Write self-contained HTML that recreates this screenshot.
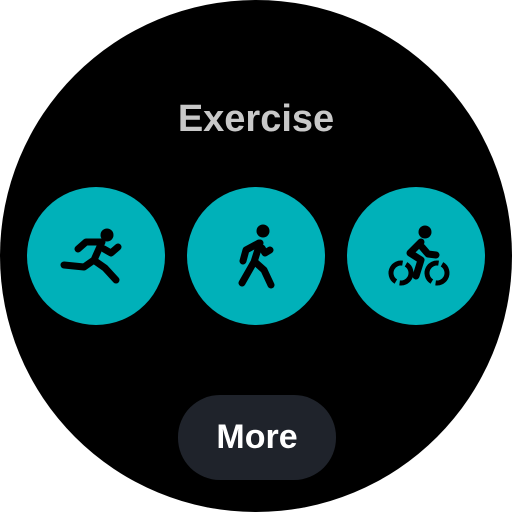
<!DOCTYPE html>
<html><head><style>
html,body{margin:0;padding:0;width:512px;height:512px;background:#fff;overflow:hidden}
.face{position:absolute;left:0;top:0;width:512px;height:512px;border-radius:50%;background:#000}
.t{position:absolute;left:0;width:512px;top:98px;text-align:center;color:#c8c8c8;font:bold 38px "Liberation Sans",sans-serif}
.btn{position:absolute;left:178px;top:395px;width:158px;height:85px;border-radius:42px;background:#1f232b;color:#fff;font:bold 34px "Liberation Sans",sans-serif;text-align:center;line-height:85px}
svg{position:absolute;left:0;top:0}
</style></head><body>
<div class="face"></div>
<div class="t">Exercise</div>
<svg width="512" height="512">
<g fill="#00b1b9"><circle cx="96" cy="256" r="69"/><circle cx="256" cy="256" r="69"/><circle cx="416" cy="256" r="69"/></g>
<g fill="#000"><circle cx="107" cy="235" r="6.5"/><circle cx="263" cy="231" r="6.5"/><circle cx="425" cy="232" r="6.5"/></g>
<g stroke="#000" stroke-width="7" fill="none" stroke-linecap="round" stroke-linejoin="round">
<path d="M78 249 L86 242 L102 242 L94 260 L84 267 L64 265"/>
<path d="M95 261 L105 268 L116 280"/>
<path d="M104 249 L111 253 L118 247"/>
<path d="M260 243 L254 262 L242 283"/>
<path d="M259 243 L246 250 L243 261"/>
<path d="M262 248 L265 253 L270 250"/>
<path d="M255 262 L264 270 L271 285"/>
<path d="M421 242 L410 253 L421 260 L416 276"/>
<path d="M422 247 L428 254 L436 255"/>
</g>
<g stroke="#000" stroke-width="5" fill="none" stroke-dasharray="27.4 4">
<circle cx="401" cy="273" r="10" transform="rotate(-60 401 273)"/><circle cx="437" cy="273" r="10" transform="rotate(-60 437 273)"/>
</g>
</svg>
<div class="btn">More</div>
</body></html>
